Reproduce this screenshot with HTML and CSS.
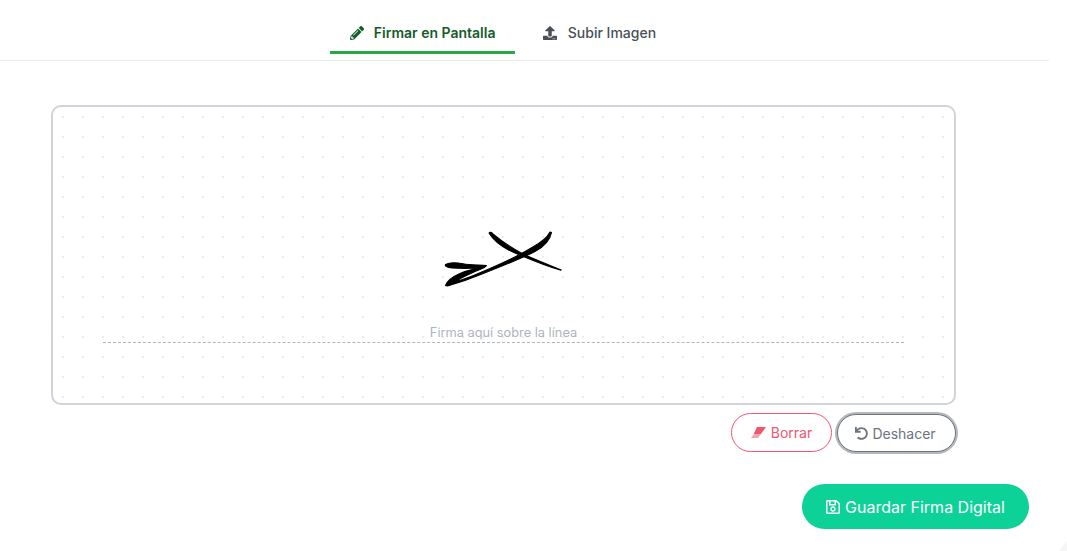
FILE: index.html
```html
<!DOCTYPE html>
<html lang="es">
<head>
<meta charset="utf-8">
<title>Firma Digital</title>
<link rel="stylesheet" href="styles.css">
</head>
<body>
<div class="page">
  <nav class="tabs">
    <button class="tab tab-active">
      <svg class="tab-icon" viewBox="0 0 512 512"><path fill="currentColor" d="M497.9 142.1l-46.1 46.1c-4.7 4.7-12.3 4.7-17 0l-111-111c-4.7-4.7-4.7-12.3 0-17l46.1-46.1c18.7-18.7 49.1-18.7 67.9 0l60.1 60.1c18.8 18.7 18.8 49.1 0 67.9zM284.2 99.8L21.6 362.4.4 483.9c-2.9 16.4 11.4 30.6 27.8 27.8l121.5-21.3 262.600-262.600c4.700-4.700 4.700-12.300 0-17l-111-111c-4.800-4.700-12.400-4.700-17.100 0zM124.100 339.900c-5.500-5.500-5.500-14.300 0-19.800l154-154c5.500-5.500 14.300-5.500 19.800 0s5.500 14.300 0 19.800l-154 154c-5.500 5.500-14.300 5.500-19.800 0zM88 424h48v36.300l-64.500 11.300-31.100-31.100L51.700 376H88v48z"/></svg>
      <span>Firmar en Pantalla</span>
    </button>
    <button class="tab tab-upload">
      <svg class="tab-icon" viewBox="0 0 512 512"><path fill="currentColor" d="M296 384h-80c-13.300 0-24-10.700-24-24V192h-87.700c-17.800 0-26.700-21.500-14.100-34.100L242.300 5.700c7.500-7.500 19.800-7.500 27.300 0l152.200 152.200c12.600 12.600 3.700 34.100-14.100 34.100H320v168c0 13.300-10.700 24-24 24zm216-8v112c0 13.300-10.700 24-24 24H24c-13.300 0-24-10.700-24-24V376c0-13.300 10.700-24 24-24h136v8c0 30.900 25.100 56 56 56h80c30.900 0 56-25.100 56-56v-8h136c13.300 0 24 10.700 24 24zm-124 88c0-11-9-20-20-20s-20 9-20 20 9 20 20 20 20-9 20-20zm64 0c0-11-9-20-20-20s-20 9-20 20 9 20 20 20 20-9 20-20z"/></svg>
      <span>Subir Imagen</span>
    </button>
  </nav>

  <section class="panel">
    <div class="canvas">
      <svg class="signature" viewBox="0 0 902 295" aria-hidden="true">
        <g transform="translate(-53 -107)">
          <path d="M489 233 C490 231.500 491.500 232.500 493 234 C500 240 509 246.500 523 254 C536 260 549 265 561 269.800 L561 270.300 C548 266.500 534 261 521 255.500 C506 250 495 243 489 233 Z"/>
          <path d="M550 232 L551.500 232.500 C550 240 544 247 535 251.500 C520 259 500 267 482 274 C470 279 458 283 447.500 286 L445.500 285.500 C447 281 452 277 460 273.500 C467 270.500 474 269.500 477 268 C470 268.500 460 268.500 452 268 C447 267.500 444.500 266 445.500 264.500 C449 262.500 456 262.300 463 263.800 C470 265.500 480 264.800 486.500 265.500 C485 268 480 269.500 474 272 C466 275.500 459 279 454 282.500 C465 279 478 274 490 268.500 C505 262 520 255 532 247.500 C541 242.500 547 238 550 232 Z"/>
        </g>
      </svg>
      <div class="baseline"><span>Firma aquí sobre la línea</span></div>
    </div>
    <div class="actions">
      <button class="pill pill-danger">
        <svg class="pill-icon eraser" viewBox="0 0 15 11"><path fill="currentColor" d="M6 0H15L9.500 7.500H2.500z"/><path class="eraser-tip" fill="currentColor" d="M2.200 8H9.200L7 11H0z"/></svg>
        <span>Borrar</span>
      </button>
      <button class="pill pill-muted">
        <svg class="pill-icon" viewBox="0 0 512 512"><path fill="currentColor" d="M212.333 224.333H12c-6.627 0-12-5.373-12-12V12C0 5.373 5.373 0 12 0h48c6.627 0 12 5.373 12 12v78.112C117.773 39.279 184.260 7.470 258.175 8.007c136.906.994 246.448 111.623 246.157 248.532C504.041 393.258 393.120 504 256.333 504c-64.089 0-122.496-24.313-166.510-64.215-5.099-4.622-5.334-12.554-.467-17.420l33.967-33.967c4.474-4.474 11.662-4.717 16.401-.525C170.760 415.336 211.580 432 256.333 432c97.268 0 176-78.716 176-176 0-97.267-78.716-176-176-176-58.496 0-110.280 28.476-142.274 72.333h98.274c6.627 0 12 5.373 12 12v48c0 6.627-5.373 12-12 12z"/></svg>
        <span>Deshacer</span>
      </button>
    </div>
    <div class="save-row">
      <button class="save">
        <svg class="save-icon" viewBox="0 0 448 512"><path fill="currentColor" d="M433.941 129.941l-83.882-83.882A48 48 0 0 0 316.118 32H48C21.490 32 0 53.490 0 80v352c0 26.510 21.490 48 48 48h352c26.510 0 48-21.490 48-48V163.882a48 48 0 0 0-14.059-33.941zM272 80v80H144V80h128zm122 352H54a6 6 0 0 1-6-6V86a6 6 0 0 1 6-6h42v104c0 13.255 10.745 24 24 24h176c13.255 0 24-10.745 24-24V83.882l78.243 78.243a6 6 0 0 1 1.757 4.243V426a6 6 0 0 1-6 6zM224 232c-48.523 0-88 39.477-88 88s39.477 88 88 88 88-39.477 88-88-39.477-88-88-88zm0 128c-22.056 0-40-17.944-40-40s17.944-40 40-40 40 17.944 40 40-17.944 40-40 40z"/></svg>
        <span>Guardar Firma Digital</span>
      </button>
    </div>
  </section>
</div>
<div class="corner"></div>
</body>
</html>
```
FILE: styles.css
```css
* { box-sizing: border-box; }

html, body {
  margin: 0;
  height: 100%;
  background: #fff;
  overflow: hidden;
}

body {
  position: relative;
  font-family: Inter, "Liberation Sans", sans-serif;
}

button {
  font-family: inherit;
  cursor: pointer;
}

.page {
  width: 1049px;
}

.corner {
  position: absolute;
  right: 0;
  bottom: 0;
  width: 8px;
  height: 11px;
  background: linear-gradient(to bottom right, transparent 50%, #f6f6f6 50%);
}

.tabs {
  display: flex;
  justify-content: center;
  gap: 8px;
  height: 61px;
  padding-top: 13px;
  padding-right: 43px;
  border-bottom: 1px solid #e9ecef;
}

.tab {
  display: flex;
  align-items: center;
  gap: 10px;
  height: 41px;
  padding: 1px 20px 0;
  border: 0;
  border-bottom: 3px solid transparent;
  background: none;
  font-size: 14px;
  font-weight: 500;
  color: #495057;
}

.tab-active {
  width: 185px;
  flex: none;
  white-space: nowrap;
  border-bottom-color: #28a745;
  color: #155c2b;
  font-weight: 600;
}

.tab-upload {
  gap: 11px;
}

.tab-icon {
  width: 14px;
  height: 14px;
  flex: none;
}

.panel {
  padding: 44px 0 0 51px;
}

.canvas {
  position: relative;
  width: 905px;
  height: 300px;
  border: 2px solid #ced4da;
  border-radius: 10px;
  background-color: #fff;
  background-image: radial-gradient(circle, #e9ecef 1px, transparent 1px);
  background-size: 20px 20px;
}

.signature {
  position: absolute;
  left: 0;
  top: 0;
  width: 902px;
  height: 295px;
  overflow: visible;
}

.signature path {
  fill: #000;
  stroke: #000;
  stroke-width: 1.1;
  stroke-linejoin: round;
}

.baseline {
  position: absolute;
  left: 50px;
  right: 50px;
  top: 235px;
  height: 1px;
  border-bottom: 1px dashed #adb5bd;
}

.baseline span {
  position: absolute;
  top: -18px;
  left: 50%;
  transform: translateX(-50%);
  white-space: nowrap;
  font-size: 12.8px;
  line-height: 18px;
  color: #adb5bd;
}

.actions {
  display: flex;
  justify-content: flex-end;
  align-items: flex-start;
  gap: 5px;
  width: 905px;
  margin-top: 8px;
}

.pill {
  display: inline-flex;
  align-items: center;
  justify-content: center;
  background: #fff;
  font-size: 14px;
  padding: 0;
}

.pill-danger {
  gap: 5px;
  width: 101px;
  height: 39px;
  border: 1px solid #f1566f;
  border-radius: 20px;
  color: #f1566f;
}

.pill-muted {
  gap: 4px;
  width: 119px;
  height: 38px;
  margin-top: 1px;
  padding-right: 2px;
  border: 1px solid #6c757d;
  border-radius: 19px;
  box-shadow: 0 0 0 2px #b4b8bc;
  color: #6c757d;
}

.pill-icon {
  width: 13px;
  height: 13px;
  flex: none;
}

.eraser {
  width: 15px;
  height: 11px;
}

.eraser-tip {
  opacity: 0.55;
}

.save-row {
  display: flex;
  justify-content: flex-end;
  width: 978px;
  margin-top: 32px;
}

.save {
  display: inline-flex;
  align-items: center;
  justify-content: center;
  gap: 5px;
  width: 227px;
  height: 45px;
  padding: 0;
  border: 0;
  border-radius: 23px;
  background: #0cd297;
  color: #fff;
  font-size: 16px;
  font-weight: 400;
}

.save-icon {
  width: 14px;
  height: 16px;
  flex: none;
}
```
